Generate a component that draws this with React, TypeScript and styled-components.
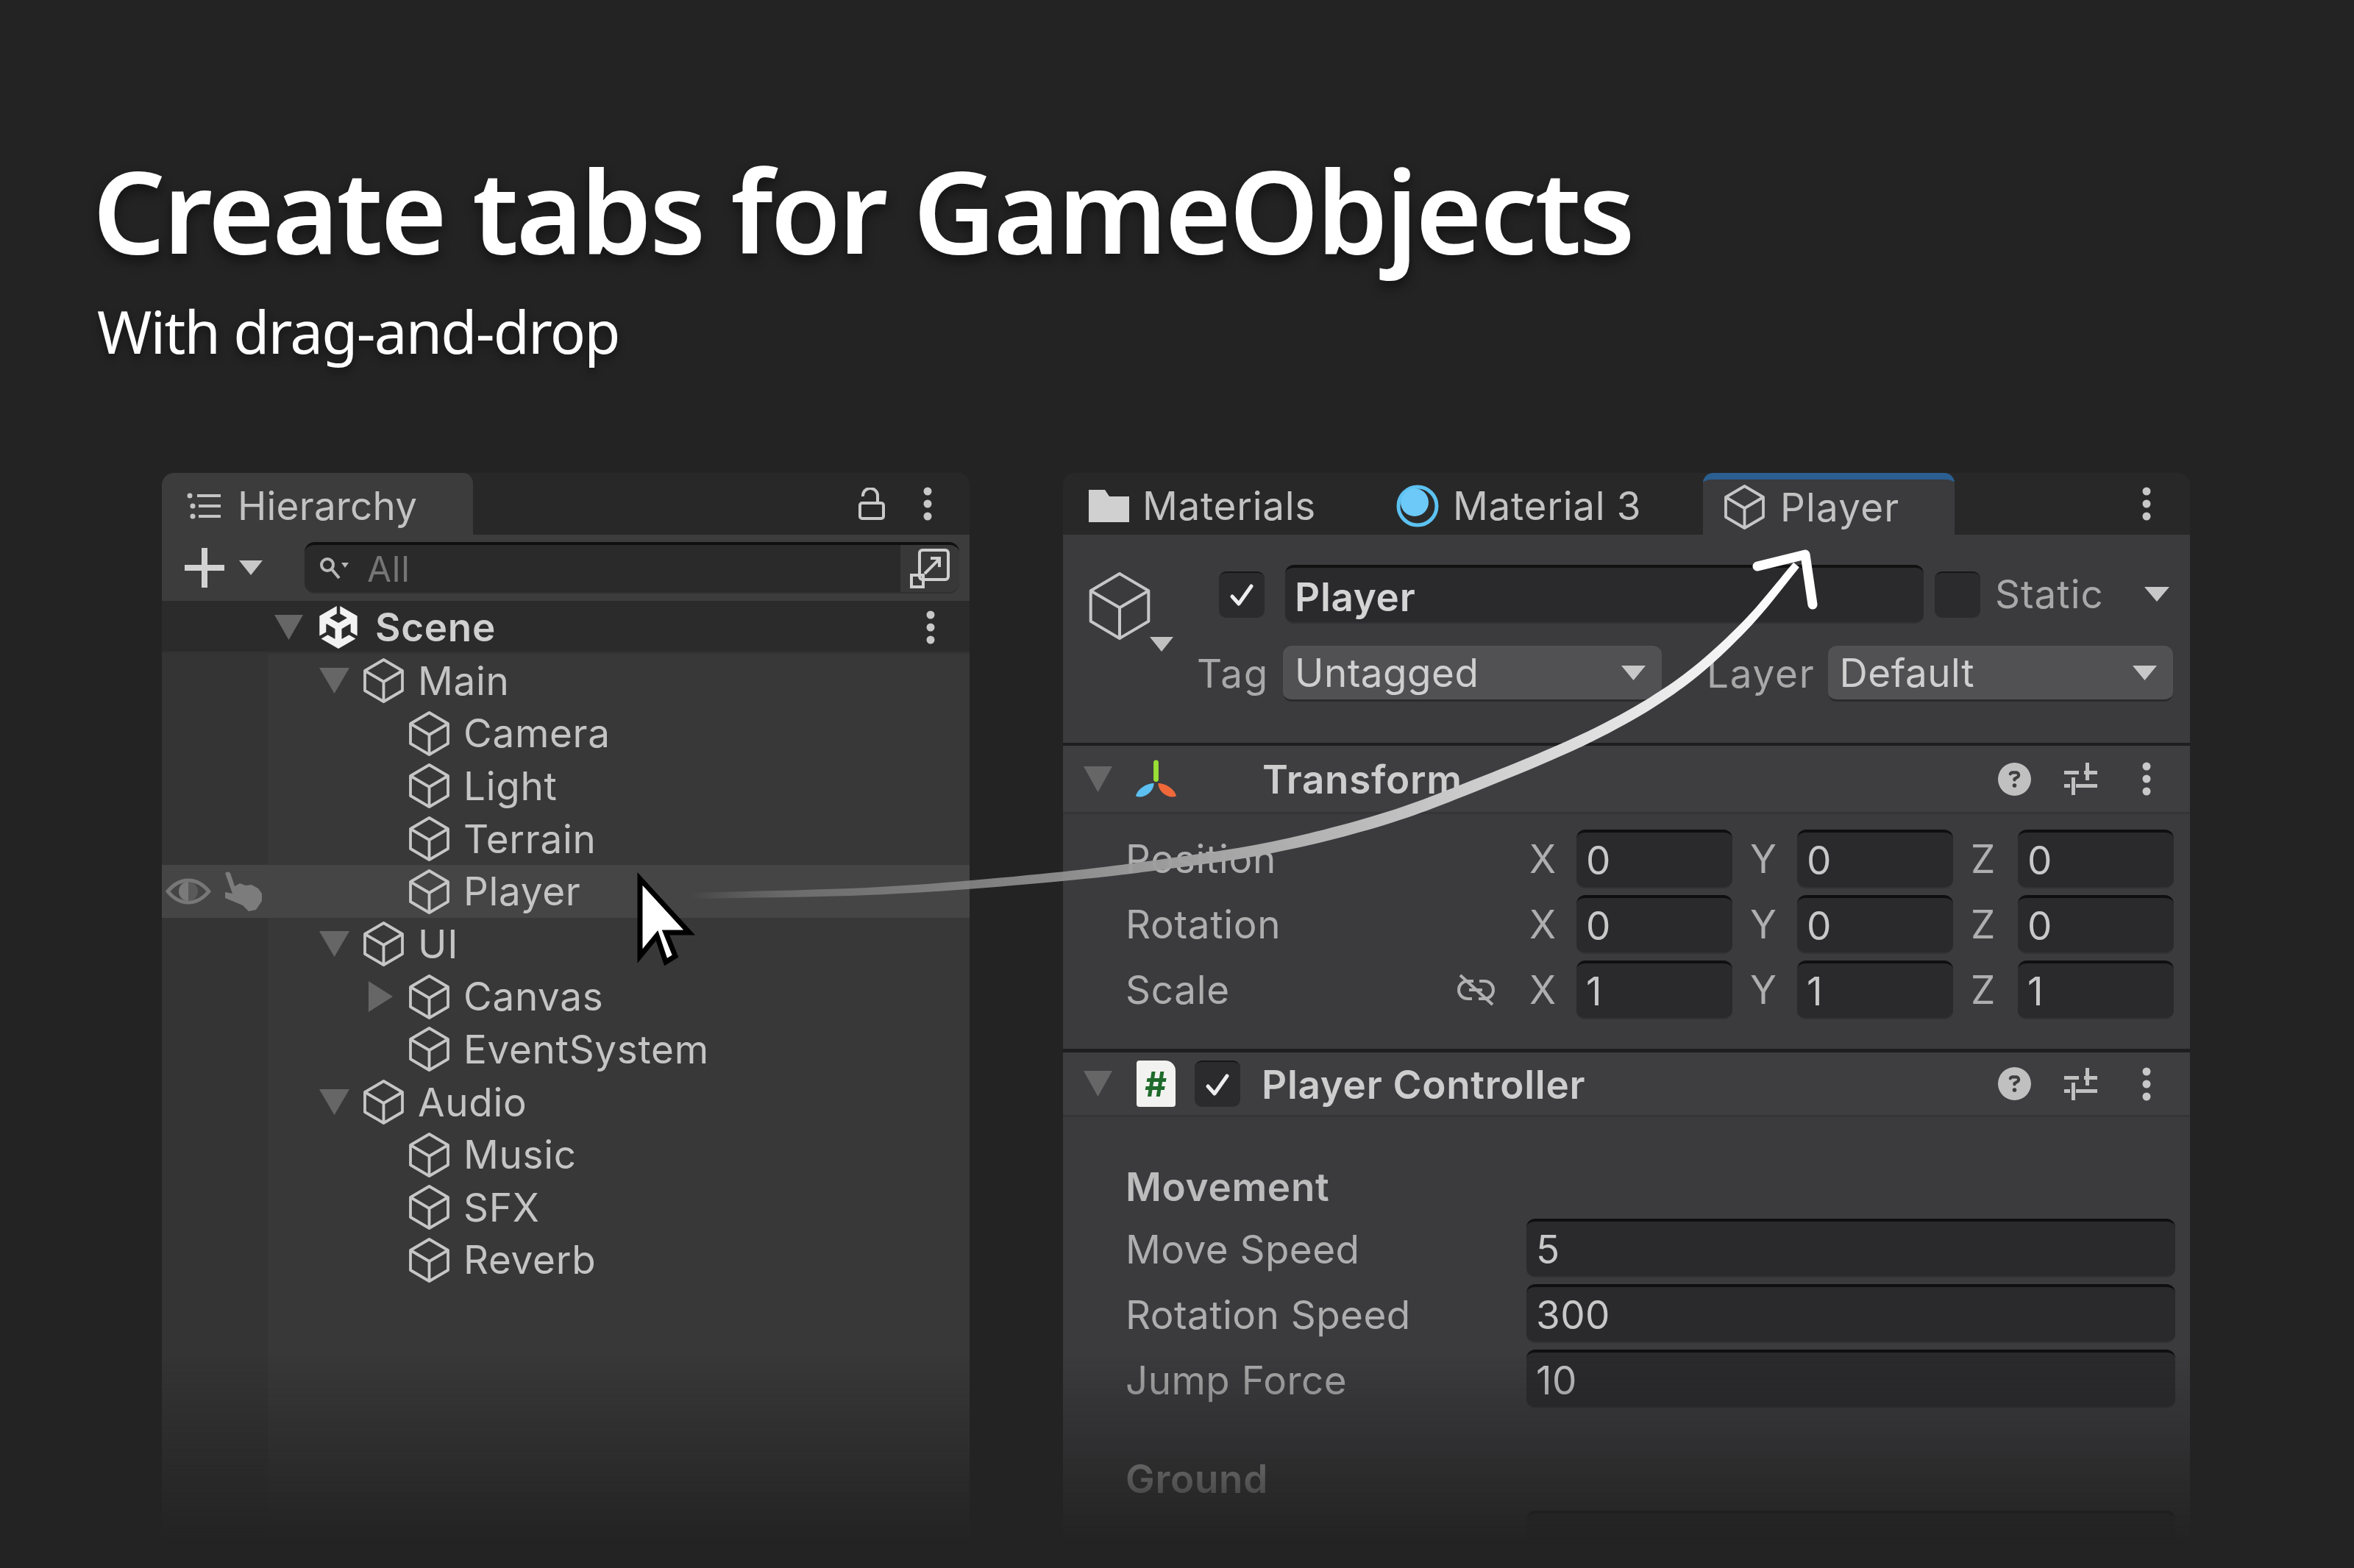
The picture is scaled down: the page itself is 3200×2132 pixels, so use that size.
import React from "react";
import styled, { createGlobalStyle } from "styled-components";
import { FaCircleQuestion } from "react-icons/fa6";
import { SiUnity } from "react-icons/si";

const Global = createGlobalStyle`
  html, body { margin: 0; padding: 0; background: #232323; }
  * { box-sizing: border-box; }
`;

const Page = styled.div`
  position: relative;
  width: 3200px;
  height: 2132px;
  overflow: hidden;
  background: #232323;
  font-family: Inter, "Noto Sans", sans-serif;
  color: #c4c4c4;
`;
const Hero = styled.header`
  height: 643px;
  padding: 190px 0 0 126px;
`;
const Title = styled.h1`
  margin: 0;
  font-family: "Noto Sans", sans-serif;
  font-weight: 600;
  font-size: 155px;
  line-height: 190px;
  letter-spacing: -3.2px;
  color: #fff;
  text-shadow: 0 8px 16px rgba(0, 0, 0, 0.45);
`;
const Subtitle = styled.p`
  margin: 22px 0 0 6px;
  font-family: "Noto Sans", sans-serif;
  font-weight: 400;
  font-size: 80px;
  line-height: 96px;
  letter-spacing: -1.8px;
  color: #fff;
  text-shadow: 0 6px 12px rgba(0, 0, 0, 0.4);
`;
const Panels = styled.main`
  display: flex;
  gap: 127px;
  padding-left: 220px;
`;
const Panel = styled.section<{ $w: number; $bg: string }>`
  width: ${(p) => p.$w}px;
  height: 1457px;
  background: ${(p) => p.$bg};
  border-radius: 16px 16px 0 0;
  overflow: hidden;
  font-size: 53px;
  letter-spacing: 0.7px;
  -webkit-mask-image: linear-gradient(180deg, #000 1197px, transparent 100%);
  mask-image: linear-gradient(180deg, #000 1197px, transparent 100%);
`;
const TabBar = styled.div`
  height: 84px;
  background: #282828;
  display: flex;
  align-items: stretch;
`;
const Tab = styled.div<{ $w: number; $active?: boolean; $stripe?: boolean; $pad: number; $gap: number; $ls?: number }>`
  width: ${(p) => p.$w}px;
  padding-left: ${(p) => p.$pad}px;
  padding-top: ${(p) => (p.$stripe ? 0 : 6)}px;
  display: flex;
  align-items: center;
  gap: ${(p) => p.$gap}px;
  color: #c2c2c2;
  letter-spacing: ${(p) => p.$ls ?? 0.7}px;
  background: ${(p) => (p.$active ? (p.$stripe ? "#3b3a3d" : "#3c3c3c") : "transparent")};
  border-top: ${(p) => (p.$stripe ? "9px solid #2b5f91" : "none")};
  border-radius: ${(p) => (p.$active ? "14px 14px 0 0" : "0")};
`;
const TabEnd = styled.div<{ $pr: number }>`
  flex: 1;
  display: flex;
  justify-content: flex-end;
  align-items: center;
  gap: 51px;
  padding-right: ${(p) => p.$pr}px;
`;
const Toolbar = styled.div`
  height: 90px;
  background: #3c3c3c;
  display: flex;
  align-items: center;
  padding-left: 31px;
`;
const PlusWrap = styled.div`
  margin-right: 20px;
  display: flex;
`;
const SearchBox = styled.div`
  margin-left: 57px;
  width: 890px;
  height: 70px;
  background: #2a2a2a;
  border-top: 4px solid #101010;
  border-bottom: 2px solid #303030;
  border-radius: 14px;
  display: flex;
  align-items: center;
  padding-left: 20px;
  gap: 23px;
  color: #757575;
  font-size: 48px;
  overflow: hidden;
`;
const SearchText = styled.span`
  flex: 1;
`;
const SearchButton = styled.div`
  width: 80px;
  height: 66px;
  background: #383838;
  display: flex;
  align-items: center;
  justify-content: center;
`;
const SceneRow = styled.div`
  height: 72px;
  padding: 3px 0 0 153px;
  background: #2b2b2b;
  display: flex;
  align-items: center;
  font-weight: 600;
  color: #d0d0d0;
  border-bottom: 3px solid #333;
`;
const SceneIcon = styled.div`
  margin-left: 19px;
  display: flex;
`;
const SceneLabel = styled.span`
  margin-left: 21px;
  flex: 1;
`;
const SceneMenu = styled.div`
  padding-right: 46px;
  display: flex;
`;
const Tree = styled.div`
  height: 1211px;
  background: linear-gradient(90deg, #343434 144px, #383838 144px);
  padding-top: 1px;
`;
const Row = styled.div<{ $hot?: boolean }>`
  height: 71.6px;
  display: grid;
  grid-template-columns: 144px 1fr;
  align-items: center;
  background: ${(p) => (p.$hot ? "#454545" : "transparent")};
`;
const Gutter = styled.div`
  display: flex;
  align-items: center;
  gap: 17px;
  padding-left: 5px;
`;
const RowBody = styled.div<{ $depth: number }>`
  padding-left: ${(p) => 70 + p.$depth * 62}px;
  display: flex;
  align-items: center;
`;
const ArrowSlot = styled.div<{ $inset?: number }>`
  width: 59px;
  padding-left: ${(p) => p.$inset ?? 0}px;
  display: flex;
`;
const RowLabel = styled.span`
  margin-left: 18px;
  color: #c4c4c4;
`;
const Inspector = styled.div`
  height: 287px;
  padding-top: 41px;
  background: #3b3a3d;
  display: grid;
  grid-template-columns: 182px 1fr;
  grid-template-rows: 80px 76px;
  row-gap: 30px;
  border-bottom: 4px solid #1e1e1e;
`;
const CubeCell = styled.div`
  position: relative;
  padding: 9px 0 0 33px;
`;
const CubeBadge = styled.div`
  position: absolute;
  left: 118px;
  top: 98px;
  display: flex;
`;
const NameRow = styled.div`
  display: flex;
  align-items: center;
  padding-left: 30px;
  padding-right: 20px;
`;
const MiniBox = styled.div<{ $ml?: number }>`
  width: 62px;
  height: 63px;
  margin-left: ${(p) => p.$ml ?? 0}px;
  flex: none;
  background: #2b2a2d;
  border-radius: 10px;
  border-top: 2px solid #161616;
  display: flex;
  align-items: center;
  justify-content: center;
`;
const NameField = styled.div`
  width: 868px;
  height: 80px;
  margin-left: 28px;
  padding: 6px 0 0 13px;
  background: #2a292c;
  border-top: 4px solid #111;
  border-bottom: 2px solid #323135;
  border-radius: 12px;
  display: flex;
  align-items: center;
  color: #d4d4d4;
  font-weight: 600;
`;
const StaticLabel = styled.span`
  margin-left: 20px;
  flex: 1;
  color: #a8a8a8;
  letter-spacing: 1px;
`;
const StaticArrow = styled.div`
  margin-right: 8px;
  display: flex;
`;
const TagRow = styled.div`
  grid-column: 2;
  display: flex;
  align-items: center;
  color: #a8a8a8;
  letter-spacing: 1.8px;
`;
const LayerLabel = styled.span`
  margin-left: 61px;
`;
const Dropdown = styled.div<{ $w: number; $ml: number }>`
  width: ${(p) => p.$w}px;
  height: 76px;
  margin-left: ${(p) => p.$ml}px;
  padding: 0 22px 0 16px;
  background: #515053;
  border-radius: 12px;
  border-bottom: 3px solid #2b2b2b;
  display: flex;
  align-items: center;
  justify-content: space-between;
  color: #cfcfcf;
  letter-spacing: 0.5px;
`;
const CompHeader = styled.div<{ $h: number }>`
  height: ${(p) => p.$h}px;
  background: #3e3d40;
  display: flex;
  align-items: center;
  padding-left: 28px;
  border-bottom: 3px solid #353437;
`;
const CompIconSlot = styled.div<{ $ml: number }>`
  margin-left: ${(p) => p.$ml}px;
  width: 57px;
  display: flex;
  align-items: center;
  justify-content: center;
`;
const CompTitle = styled.span<{ $ml: number }>`
  flex: 1;
  margin-left: ${(p) => p.$ml}px;
  padding-top: 2px;
  font-weight: 600;
  color: #cdcdcd;
`;
const CompTools = styled.div`
  display: flex;
  align-items: center;
  gap: 45px;
  padding-right: 52px;
  color: #c0c0c0;
`;
const TuneWrap = styled.div`
  margin-right: 15px;
  display: flex;
`;
const ScriptIcon = styled.div`
  width: 53px;
  height: 63px;
  background: #f2f2f0;
  border-radius: 4px 14px 4px 4px;
  display: flex;
  align-items: center;
  justify-content: center;
  color: #1f6b2c;
  font-weight: 700;
  font-size: 46px;
`;
const TransformBody = styled.div`
  height: 324px;
  padding-top: 21px;
  background: #3b3a3d;
  border-bottom: 5px solid #1e1e1e;
`;
const VecRow = styled.div`
  height: 80px;
  margin-bottom: 9px;
  padding: 0 22px 0 85px;
  display: flex;
  align-items: center;
  color: #aeaeae;
`;
const VecLabel = styled.span`
  flex: 1;
`;
const LinkSlot = styled.div`
  margin-right: 45px;
  display: flex;
`;
const Axis = styled.div`
  display: grid;
  grid-template-columns: 64px 212px;
  align-items: center;
  & + & {
    margin-left: 24px;
  }
`;
const Field = styled.div`
  height: 80px;
  padding: 2px 0 0 13px;
  background: #2a292c;
  border-top: 4px solid #0f0f10;
  border-bottom: 2px solid #323135;
  border-radius: 12px;
  display: flex;
  align-items: center;
  color: #c8c8c8;
`;
const ScriptBody = styled.div`
  height: 700px;
  padding: 60px 20px 0 85px;
  background: #3b3a3d;
`;
const SectionHead = styled.div<{ $mt?: number }>`
  height: 66px;
  padding-top: 3px;
  display: flex;
  align-items: center;
  margin: ${(p) => p.$mt ?? 0}px 0 12px;
  font-weight: 600;
  color: #bcbcbc;
`;
const PropRow = styled.div`
  height: 80px;
  margin-bottom: 9px;
  display: grid;
  grid-template-columns: 545px 1fr;
  align-items: center;
  color: #aeaeae;
  letter-spacing: 0.45px;
`;
const PropLabel = styled.span`
  padding-top: 3px;
`;
const Overlay = styled.svg`
  position: absolute;
  left: 0;
  top: 0;
  pointer-events: none;
`;
const Cursor = styled.svg`
  position: absolute;
  left: 855px;
  top: 1180px;
`;

const Cube = ({ s = 57, h = 61, c = "#c6c6c6", w = 3.8 }: { s?: number; h?: number; c?: string; w?: number }) => (
  <svg width={s} height={h} viewBox="0 0 57 61" fill="none" stroke={c} strokeWidth={(w * 57) / s} strokeLinejoin="round">
    <path d="M28.5 2 54 17v27L28.5 59 3 44V17Z" />
    <path d="M3 17l25.5 15L54 17M28.5 32v27" />
  </svg>
);
const Tri = ({ w = 40, h = 34, dir = "down", c = "#666" }: { w?: number; h?: number; dir?: string; c?: string }) => (
  <svg width={w} height={h} viewBox="0 0 10 10" preserveAspectRatio="none">
    <path d={dir === "down" ? "M0 0h10L5 10Z" : "M0 0l10 5L0 10Z"} fill={c} />
  </svg>
);
const Kebab = ({ c = "#c8c8c8" }: { c?: string }) => (
  <svg width="14" height="46" viewBox="0 0 14 46" fill={c}>
    <circle cx="7" cy="6" r="5.5" />
    <circle cx="7" cy="23" r="5.5" />
    <circle cx="7" cy="40" r="5.5" />
  </svg>
);
const Check = () => (
  <svg width="40" height="36" viewBox="0 0 40 36" fill="none" stroke="#eee" strokeWidth="5" strokeLinecap="round" strokeLinejoin="round">
    <path d="M7 20l9 10L33 6" />
  </svg>
);
const ListIcon = () => (
  <svg width="46" height="36" viewBox="0 0 46 36" fill="#c4c4c4">
    <circle cx="4" cy="4" r="3.5" />
    <circle cx="8" cy="18" r="3.5" />
    <circle cx="8" cy="32" r="3.5" />
    <rect x="14" y="2" width="32" height="4" />
    <rect x="16" y="16" width="30" height="4" />
    <rect x="16" y="30" width="30" height="4" />
  </svg>
);
const LockIcon = () => (
  <svg width="36" height="44" viewBox="0 0 36 44" fill="none" stroke="#c8c8c8" strokeWidth="4">
    <rect x="2" y="21" width="32" height="21" rx="3" />
    <path d="M6 12a10 10 0 0 1 20-2v11" />
  </svg>
);
const Plus = () => (
  <svg width="54" height="54" viewBox="0 0 54 54" fill="#d2d2d2">
    <rect y="23" width="54" height="8" />
    <rect x="23" width="8" height="54" />
  </svg>
);
const SearchIcon = () => (
  <svg width="42" height="32" viewBox="0 0 42 32" fill="none" stroke="#b8b8b8" strokeWidth="4">
    <circle cx="11" cy="11" r="8" />
    <path d="M17 17l10 12" />
    <path d="M30 8h10l-5 7Z" fill="#b8b8b8" stroke="none" />
  </svg>
);
const SceneVis = () => (
  <svg width="54" height="54" viewBox="0 0 54 54" fill="none" stroke="#cfcfcf" strokeWidth="4">
    <rect x="13" y="2" width="39" height="40" rx="4" />
    <rect x="2" y="36" width="16" height="16" />
    <path d="M20 34l20-20M28 13h12v12" />
  </svg>
);
const Eye = () => (
  <svg width="62" height="36" viewBox="0 0 62 36" fill="none" stroke="#777" strokeWidth="5">
    <path d="M3 18C12 7 22 3 31 3s19 4 28 15C50 29 40 33 31 33S12 29 3 18Z" />
    <circle cx="31" cy="18" r="13" fill="#5a5a5a" stroke="none" />
    <path d="M31 5a13 13 0 0 0 0 26Z" fill="#7a7a7a" stroke="none" />
  </svg>
);
const Hand = () => (
  <svg width="52" height="54" viewBox="0 0 52 54" fill="#7c7c7c">
    <path d="M2 2Q6-1 9 2L15 20 22 16 30 19 38 18 47 23 52 30V40L44 52 34 54 26 46 2 36V28L12 30Z" />
  </svg>
);
const FolderIcon = () => (
  <svg width="55" height="44" viewBox="0 0 55 44" fill="#d0d0d0">
    <path d="M0 0h22l6 9h27v35H0Z" />
  </svg>
);
const Sphere = () => (
  <svg width="60" height="60" viewBox="0 0 60 60">
    <circle cx="30" cy="30" r="26" fill="#2b2b2b" stroke="#5cc2f2" strokeWidth="5" />
    <circle cx="26" cy="25" r="19" fill="#6cc9f8" />
  </svg>
);
const TransformIcon = () => (
  <svg width="58" height="52" viewBox="0 0 58 52">
    <rect x="25.5" y="0" width="7" height="30" rx="3.5" fill="#9adf35" />
    <path d="M26 32 C14 32 2 42 1 50 C12 54 26 44 26 32Z" fill="#5cc0f2" />
    <path d="M32 32 C44 32 56 42 57 50 C46 54 32 44 32 32Z" fill="#f0683a" />
  </svg>
);
const Tune = () => (
  <svg width="45" height="44" viewBox="0 0 45 44" fill="#c0c0c0">
    <rect x="0" y="11" width="20" height="5" />
    <rect x="27" y="11" width="18" height="5" />
    <rect x="29" y="0" width="5" height="24" />
    <rect x="0" y="29" width="8" height="5" />
    <rect x="16" y="29" width="29" height="5" />
    <rect x="10" y="20" width="5" height="24" />
  </svg>
);
const LinkOff = () => (
  <svg width="55" height="44" viewBox="0 0 55 44" fill="none" stroke="#b0b0b0" strokeWidth="4">
    <path d="M24 10H16a12 12 0 0 0 0 24h6" />
    <path d="M32 10h7a12 12 0 0 1 0 24h-8" />
    <path d="M18 22h18" />
    <path d="M6 2l44 40" />
  </svg>
);

/* Arrow: centreline sampled with a Catmull-Rom spline, widened into a tapered ribbon */
const spine: [number, number][] = [
  [940, 1218], [1200, 1211], [1430, 1193], [1590, 1174], [1730, 1152], [1870, 1117], [1990, 1074], [2160, 1002], [2280, 932], [2370, 853], [2442, 768],
];
const ribbon = () => {
  const pts: [number, number][] = [];
  for (let i = 0; i < spine.length - 1; i++) {
    const p0 = spine[Math.max(i - 1, 0)], p1 = spine[i], p2 = spine[i + 1], p3 = spine[Math.min(i + 2, spine.length - 1)];
    for (let k = 0; k < 12; k++) {
      const t = k / 12, t2 = t * t, t3 = t2 * t;
      pts.push([0, 1].map((a) =>
        0.5 * (2 * p1[a] + (p2[a] - p0[a]) * t + (2 * p0[a] - 5 * p1[a] + 4 * p2[a] - p3[a]) * t2 + (3 * p1[a] - p0[a] - 3 * p2[a] + p3[a]) * t3)
      ) as [number, number]);
    }
  }
  pts.push(spine[spine.length - 1]);
  const a: string[] = [], b: string[] = [];
  pts.forEach((p, i) => {
    const q = pts[Math.min(i + 1, pts.length - 1)], o = pts[Math.max(i - 1, 0)];
    const dx = q[0] - o[0], dy = q[1] - o[1], l = Math.hypot(dx, dy) || 1;
    const s = i / pts.length;
    const w = 4 + 3.5 * Math.sin(Math.PI * s) + s;
    a.push(`${(p[0] - (dy / l) * w).toFixed(1)} ${(p[1] + (dx / l) * w).toFixed(1)}`);
    b.unshift(`${(p[0] + (dy / l) * w).toFixed(1)} ${(p[1] - (dx / l) * w).toFixed(1)}`);
  });
  return `M${a.join("L")}L${b.join("L")}Z`;
};

type Node = { name: string; depth: number; arrow?: "down" | "right"; hot?: boolean };
const nodes: Node[] = [
  { name: "Main", depth: 0, arrow: "down" },
  { name: "Camera", depth: 1 },
  { name: "Light", depth: 1 },
  { name: "Terrain", depth: 1 },
  { name: "Player", depth: 1, hot: true },
  { name: "UI", depth: 0, arrow: "down" },
  { name: "Canvas", depth: 1, arrow: "right" },
  { name: "EventSystem", depth: 1 },
  { name: "Audio", depth: 0, arrow: "down" },
  { name: "Music", depth: 1 },
  { name: "SFX", depth: 1 },
  { name: "Reverb", depth: 1 },
];
const vectors = [
  { label: "Position", v: "0" },
  { label: "Rotation", v: "0" },
  { label: "Scale", v: "1", link: true },
];

const Tools = () => (
  <CompTools>
    <FaCircleQuestion size={45} />
    <TuneWrap>
      <Tune />
    </TuneWrap>
    <Kebab />
  </CompTools>
);

export default function App() {
  return (
    <Page>
      <Global />
      <Hero>
        <Title>Create tabs for GameObjects</Title>
        <Subtitle>With drag-and-drop</Subtitle>
      </Hero>
      <Panels>
        <Panel $w={1098} $bg="#383838">
          <TabBar>
            <Tab $w={423} $active $pad={34} $gap={23} $ls={0.2}>
              <ListIcon />
              Hierarchy
            </Tab>
            <TabEnd $pr={50}>
              <LockIcon />
              <Kebab />
            </TabEnd>
          </TabBar>
          <Toolbar>
            <PlusWrap>
              <Plus />
            </PlusWrap>
            <Tri w={32} h={20} c="#c8c8c8" />
            <SearchBox>
              <SearchIcon />
              <SearchText>All</SearchText>
              <SearchButton>
                <SceneVis />
              </SearchButton>
            </SearchBox>
          </Toolbar>
          <SceneRow>
            <Tri w={39} h={34} />
            <SceneIcon>
              <SiUnity size={58} color="#f2f2f2" />
            </SceneIcon>
            <SceneLabel>Scene</SceneLabel>
            <SceneMenu>
              <Kebab />
            </SceneMenu>
          </SceneRow>
          <Tree>
            {nodes.map((n) => (
              <Row key={n.name} $hot={n.hot}>
                <Gutter>
                  {n.hot && (
                    <>
                      <Eye />
                      <Hand />
                    </>
                  )}
                </Gutter>
                <RowBody $depth={n.depth}>
                  <ArrowSlot $inset={n.arrow === "right" ? 5 : 0}>
                    {n.arrow === "down" && <Tri w={41} h={35} />}
                    {n.arrow === "right" && <Tri w={33} h={42} dir="right" />}
                  </ArrowSlot>
                  <Cube />
                  <RowLabel>{n.name}</RowLabel>
                </RowBody>
              </Row>
            ))}
          </Tree>
        </Panel>
        <Panel $w={1532} $bg="#3b3a3d">
          <TabBar>
            <Tab $w={437} $pad={35} $gap={18}>
              <FolderIcon />
              Materials
            </Tab>
            <Tab $w={433} $pad={15} $gap={18}>
              <Sphere />
              Material 3
            </Tab>
            <Tab $w={342} $active $stripe $pad={28} $gap={20} $ls={1.2}>
              <Cube />
              Player
            </Tab>
            <TabEnd $pr={52}>
              <Kebab />
            </TabEnd>
          </TabBar>
          <Inspector>
            <CubeCell>
              <Cube s={88} h={94} w={4} />
              <CubeBadge>
                <Tri w={32} h={20} c="#c0c0c0" />
              </CubeBadge>
            </CubeCell>
            <NameRow>
              <MiniBox>
                <Check />
              </MiniBox>
              <NameField>Player</NameField>
              <MiniBox $ml={15} />
              <StaticLabel>Static</StaticLabel>
              <StaticArrow>
                <Tri w={34} h={20} c="#c8c8c8" />
              </StaticArrow>
            </NameRow>
            <TagRow>
              Tag
              <Dropdown $w={515} $ml={19}>
                Untagged
                <Tri w={33} h={20} c="#c8c8c8" />
              </Dropdown>
              <LayerLabel>Layer</LayerLabel>
              <Dropdown $w={469} $ml={17}>
                Default
                <Tri w={33} h={20} c="#c8c8c8" />
              </Dropdown>
            </TagRow>
          </Inspector>
          <CompHeader $h={93}>
            <Tri w={39} h={35} />
            <CompIconSlot $ml={31}>
              <TransformIcon />
            </CompIconSlot>
            <CompTitle $ml={116}>Transform</CompTitle>
            <Tools />
          </CompHeader>
          <TransformBody>
            {vectors.map((r) => (
              <VecRow key={r.label}>
                <VecLabel>{r.label}</VecLabel>
                {r.link && (
                  <LinkSlot>
                    <LinkOff />
                  </LinkSlot>
                )}
                {["X", "Y", "Z"].map((a) => (
                  <Axis key={a}>
                    <span>{a}</span>
                    <Field>{r.v}</Field>
                  </Axis>
                ))}
              </VecRow>
            ))}
          </TransformBody>
          <CompHeader $h={88}>
            <Tri w={39} h={35} />
            <CompIconSlot $ml={31}>
              <ScriptIcon>#</ScriptIcon>
            </CompIconSlot>
            <MiniBox $ml={24}>
              <Check />
            </MiniBox>
            <CompTitle $ml={29}>Player Controller</CompTitle>
            <Tools />
          </CompHeader>
          <ScriptBody>
            <SectionHead>Movement</SectionHead>
            {[
              ["Move Speed", "5"],
              ["Rotation Speed", "300"],
              ["Jump Force", "10"],
            ].map(([l, v]) => (
              <PropRow key={l}>
                <PropLabel>{l}</PropLabel>
                <Field>{v}</Field>
              </PropRow>
            ))}
            <SectionHead $mt={61}>Ground</SectionHead>
            <PropRow>
              <PropLabel />
              <Field />
            </PropRow>
          </ScriptBody>
        </Panel>
      </Panels>
      <Overlay width="3200" height="2132" viewBox="0 0 3200 2132">
        <defs>
          <linearGradient id="arrowFill" gradientUnits="userSpaceOnUse" x1="940" y1="0" x2="2440" y2="0">
            <stop offset="0" stopColor="#888" stopOpacity="0" />
            <stop offset="0.1" stopColor="#777" stopOpacity="0.8" />
            <stop offset="0.5" stopColor="#a8a8a8" />
            <stop offset="0.8" stopColor="#dcdcdc" />
            <stop offset="1" stopColor="#fff" />
          </linearGradient>
        </defs>
        <path d={ribbon()} fill="url(#arrowFill)" />
        <path d="M2389 770 2454 754 2464 822" fill="none" stroke="#fff" strokeWidth="13" strokeLinecap="round" strokeLinejoin="round" />
      </Overlay>
      <Cursor width="100" height="140" viewBox="0 0 100 140">
        <path d="M15 15 V120 L38 92 L50 128 L63 120 L50 88 H82 Z" fill="#fff" stroke="#000" strokeWidth="7" strokeLinejoin="miter" />
      </Cursor>
    </Page>
  );
}
